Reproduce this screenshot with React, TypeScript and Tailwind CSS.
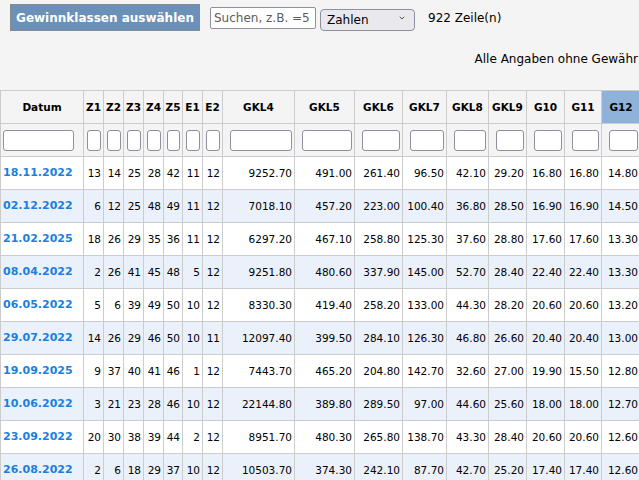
import { ChevronDown } from "lucide-react";

type Col = { key: string; w: string; filter: string };

const COLS: Col[] = [
  { key: "Datum", w: "w-[83px]", filter: "pl-[2px] pr-[9px]" },
  { key: "Z1", w: "w-[20px]", filter: "pl-[3px] pr-[2px]" },
  { key: "Z2", w: "w-[20px]", filter: "pl-[3px] pr-[2px]" },
  { key: "Z3", w: "w-[20px]", filter: "pl-[3px] pr-[2px]" },
  { key: "Z4", w: "w-[20px]", filter: "pl-[3px] pr-[2px]" },
  { key: "Z5", w: "w-[19px]", filter: "pl-[3px] pr-[2px]" },
  { key: "E1", w: "w-[20px]", filter: "pl-[3px] pr-[2px]" },
  { key: "E2", w: "w-[20px]", filter: "pl-[3px] pr-[2px]" },
  { key: "GKL4", w: "w-[72px]", filter: "pl-[7px] pr-[2px]" },
  { key: "GKL5", w: "w-[60px]", filter: "pl-[7px] pr-[2px]" },
  { key: "GKL6", w: "w-[48px]", filter: "pl-[7px] pr-[2px]" },
  { key: "GKL7", w: "w-[44px]", filter: "pl-[7px] pr-[2px]" },
  { key: "GKL8", w: "w-[42px]", filter: "pl-[7px] pr-[2px]" },
  { key: "GKL9", w: "w-[38px]", filter: "pl-[7px] pr-[2px]" },
  { key: "G10", w: "w-[38px]", filter: "pl-[7px] pr-[2px]" },
  { key: "G11", w: "w-[37px]", filter: "pl-[7px] pr-[2px]" },
  { key: "G12", w: "w-[39px]", filter: "pl-[7px] pr-[2px]" },
];

const ROWS: string[][] = [
  ["18.11.2022", "13", "14", "25", "28", "42", "11", "12", "9252.70", "491.00", "261.40", "96.50", "42.10", "29.20", "16.80", "16.80", "14.80"],
  ["02.12.2022", "6", "12", "25", "48", "49", "11", "12", "7018.10", "457.20", "223.00", "100.40", "36.80", "28.50", "16.90", "16.90", "14.50"],
  ["21.02.2025", "18", "26", "29", "35", "36", "11", "12", "6297.20", "467.10", "258.80", "125.30", "37.60", "28.80", "17.60", "17.60", "13.30"],
  ["08.04.2022", "2", "26", "41", "45", "48", "5", "12", "9251.80", "480.60", "337.90", "145.00", "52.70", "28.40", "22.40", "22.40", "13.30"],
  ["06.05.2022", "5", "6", "39", "49", "50", "10", "12", "8330.30", "419.40", "258.20", "133.00", "44.30", "28.20", "20.60", "20.60", "13.20"],
  ["29.07.2022", "14", "26", "29", "46", "50", "10", "11", "12097.40", "399.50", "284.10", "126.30", "46.80", "26.60", "20.40", "20.40", "13.00"],
  ["19.09.2025", "9", "37", "40", "41", "46", "1", "12", "7443.70", "465.20", "204.80", "142.70", "32.60", "27.00", "19.90", "15.50", "12.80"],
  ["10.06.2022", "3", "21", "23", "28", "46", "10", "12", "22144.80", "389.80", "289.50", "97.00", "44.60", "25.60", "18.00", "18.00", "12.70"],
  ["23.09.2022", "20", "30", "38", "39", "44", "2", "12", "8951.70", "480.30", "265.80", "138.70", "43.30", "28.40", "20.60", "20.60", "12.60"],
  ["26.08.2022", "2", "6", "18", "29", "37", "10", "12", "10503.70", "374.30", "242.10", "87.70", "42.70", "25.20", "17.40", "17.40", "12.60"],
];

export default function App() {
  return (
    <div className="min-h-screen w-[639px] overflow-hidden bg-[#f4f4f4] font-['DejaVu_Sans',sans-serif] text-black">
      <div className="flex h-[35px] items-center pl-[10px]">
        <button
          type="button"
          className="h-[27px] w-[190px] border border-[#8a8a8a] bg-[#6b91b8] text-[12px] font-bold text-white"
        >
          Gewinnklassen auswählen
        </button>
        <input
          placeholder="Suchen, z.B. =5"
          className="ml-[10px] h-[22px] w-[106px] rounded-[2px] border border-[#8f8f9d] bg-white px-[3px] text-[12px] placeholder:text-[#5c5c5c]"
        />
        <div className="relative ml-[4px] h-[22px] w-[95px]">
          <select className="h-full w-full appearance-none rounded-[4px] border border-[#8f8f9d] bg-[#e9e9ed] pl-[6px] text-[12px]">
            <option>Zahlen</option>
          </select>
          <ChevronDown
            className="pointer-events-none absolute right-[9px] top-[7px] h-[8px] w-[8px] text-[#333]"
            strokeWidth={2.5}
          />
        </div>
        <span className="ml-[13px] text-[12px]">922 Zeile(n)</span>
      </div>

      <div className="mt-[16px] pr-px text-right text-[12px] leading-[16px]">
        Alle Angaben ohne Gewähr
      </div>

      <table className="mt-[23px] w-[640px] table-fixed border-collapse text-[10.5px]">
        <colgroup>
          {COLS.map((c) => (
            <col key={c.key} className={c.w} />
          ))}
        </colgroup>
        <thead>
          <tr className="h-[33px]">
            {COLS.map((c) => (
              <th
                key={c.key}
                className={
                  c.key === "G12"
                    ? "border border-[#cccccc] bg-[#8fb2da] px-0 pt-px text-center font-bold"
                    : "border border-[#cccccc] bg-[#f4f4f4] px-0 pt-px text-center font-bold"
                }
              >
                {c.key}
              </th>
            ))}
          </tr>
          <tr className="h-[33px]">
            {COLS.map((c) => (
              <th key={c.key} className={`border border-[#cccccc] bg-[#f4f4f4] ${c.filter}`}>
                <input className="block h-[21px] w-full rounded-[3px] border border-[#8f8f9d] bg-white" />
              </th>
            ))}
          </tr>
        </thead>
        <tbody>
          {ROWS.map((r, i) => (
            <tr key={r[0]} className={i % 2 === 0 ? "h-[33px] bg-white" : "h-[33px] bg-[#eaf1fa]"}>
              {r.map((v, j) =>
                j === 0 ? (
                  <td key={j} className="border border-[#cccccc] pl-[2px] pt-px text-[11px] font-bold text-[#1a7fe0]">
                    {v}
                  </td>
                ) : (
                  <td key={j} className="border border-[#cccccc] pr-[2px] pt-px text-right">
                    {v}
                  </td>
                ),
              )}
            </tr>
          ))}
        </tbody>
      </table>
    </div>
  );
}
